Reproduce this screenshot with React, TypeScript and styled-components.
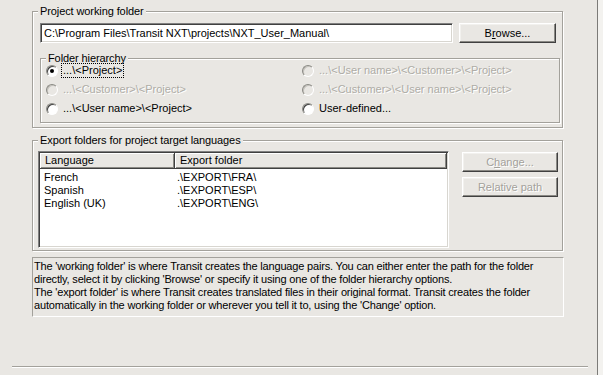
import styled, { createGlobalStyle } from "styled-components";

const GlobalStyle = createGlobalStyle`
  html, body {
    margin: 0;
    padding: 0;
  }
  body {
    background: #e9e7e3;
    font-family: "Liberation Sans", Arial, sans-serif;
    font-size: 11px;
    color: #000;
  }
`;

const Window = styled.div`
  display: flex;
  width: 603px;
  height: 375px;
  overflow: hidden;
  background: #e9e7e3;
`;
const Main = styled.div`
  flex: 1;
  display: flex;
  flex-direction: column;
  padding-left: 12px;
`;
const Edge = styled.div`
  width: 5px;
  border-left: 1px solid #7c7b78;
  background: #f3f2ef;
`;
const Pane = styled.div`
  display: flex;
  flex-direction: column;
  width: 531px;
  margin-left: 20px;
  padding-top: 5px;
`;
const GroupBox = styled.fieldset<{ $pad: string; $mt?: number; $mx?: string }>`
  margin: ${(p) => p.$mt ?? 0}px ${(p) => p.$mx ?? "0"} 0;
  padding: ${(p) => p.$pad};
  border: 1px solid #a3a19b;
  box-shadow: inset 1px 1px 0 #fff, 1px 1px 0 #fff;
  min-width: 0;
`;
const Caption = styled.legend<{ $shift?: number }>`
  padding: 0 2px;
  margin-left: ${(p) => p.$shift ?? 0}px;
  line-height: 12px;
  letter-spacing: -0.1px;
  background: #e9e7e3;
`;
const SmallCaption = styled(Caption)`
  line-height: 10px;
`;
const PathRow = styled.div`
  display: flex;
  gap: 6px;
`;
const TextBox = styled.div`
  box-sizing: border-box;
  width: 413px;
  height: 20px;
  border: 1px solid;
  border-color: #808080 #fff #fff #808080;
  box-shadow: inset 1px 1px 0 #404040, inset -1px -1px 0 #d8d6d0;
  background: #fff;
  padding: 0 3px;
  display: flex;
  align-items: center;
  white-space: nowrap;
`;
const PushButton = styled.button<{ $w?: number }>`
  box-sizing: border-box;
  width: ${(p) => p.$w ?? 96}px;
  height: 20px;
  padding: 0;
  font: inherit;
  color: #000;
  background: #e9e7e3;
  border: 1px solid;
  border-color: #fff #404040 #404040 #fff;
  box-shadow: inset -1px -1px 0 #8a8984, inset 1px 1px 0 #f2f1ee;
  &:disabled {
    color: #a3a19b;
    text-shadow: 1px 1px 0 #fff;
  }
  u {
    text-decoration: underline;
  }
`;
const HierarchyGrid = styled.div`
  display: grid;
  grid-template-columns: 256px 1fr;
  row-gap: 4px;
`;
const RadioRow = styled.div<{ $disabled?: boolean }>`
  display: flex;
  align-items: center;
  gap: 4px;
  height: 15px;
  white-space: nowrap;
  color: ${(p) => (p.$disabled ? "#aeaca6" : "#000")};
  text-shadow: ${(p) => (p.$disabled ? "1px 1px 0 #fff" : "none")};
`;
const RadioDot = styled.span<{ $checked?: boolean; $disabled?: boolean }>`
  box-sizing: border-box;
  flex: none;
  width: 12px;
  height: 12px;
  border-radius: 50%;
  border: 1px solid;
  border-color: #8a8984 #fff #fff #8a8984;
  box-shadow: inset 1px 1px 0 ${(p) => (p.$disabled ? "#c4c2bc" : "#404040")};
  background: ${(p) => (p.$disabled ? "#e9e7e3" : "#fff")};
  display: flex;
  align-items: center;
  justify-content: center;
  &::after {
    content: "";
    display: ${(p) => (p.$checked ? "block" : "none")};
    width: 4px;
    height: 4px;
    border-radius: 50%;
    background: #000;
  }
`;
const RadioLabel = styled.span<{ $focus?: boolean }>`
  padding: 0 1px;
  line-height: 13px;
  outline: ${(p) => (p.$focus ? "1px dotted #000" : "none")};
`;
const ExportRow = styled.div`
  display: flex;
  gap: 13px;
`;
const ListView = styled.div`
  box-sizing: border-box;
  width: 411px;
  height: 97px;
  border: 1px solid;
  border-color: #808080 #fff #fff #808080;
  box-shadow: inset 1px 1px 0 #404040, inset -1px -1px 0 #d8d6d0;
  background: #fff;
  padding: 1px;
`;
const HeaderRow = styled.div`
  display: grid;
  grid-template-columns: 135px 1fr;
  height: 16px;
`;
const HeaderCell = styled.div`
  box-sizing: border-box;
  background: #e9e7e3;
  border-right: 1px solid #404040;
  border-bottom: 1px solid #404040;
  box-shadow: inset 1px 1px 0 #fff, inset -1px -1px 0 #8a8984;
  padding-left: 5px;
  line-height: 15px;
`;
const ListBody = styled.div`
  padding-top: 2px;
`;
const ListRow = styled.div`
  display: grid;
  grid-template-columns: 135px 1fr;
  line-height: 13px;
`;
const Cell = styled.span<{ $pad: number }>`
  padding-left: ${(p) => p.$pad}px;
`;
const ButtonColumn = styled.div`
  display: flex;
  flex-direction: column;
  gap: 5px;
  margin-top: 1px;
`;
const Hint = styled.div`
  box-sizing: border-box;
  width: 532px;
  height: 60px;
  margin-top: 6px;
  border: 1px solid;
  border-color: #a3a19b #fff #fff #a3a19b;
  padding: 2px 0 0 1px;
  line-height: 13px;
  letter-spacing: -0.18px;
  white-space: nowrap;
`;
const Separator = styled.div`
  width: 576px;
  margin-top: 49px;
  border-top: 1px solid #a3a19b;
  border-bottom: 1px solid #fff;
`;

type Option = {
  label: string;
  checked?: boolean;
  disabled?: boolean;
  focus?: boolean;
};

const options: Option[] = [
  { label: "...\\<Project>", checked: true, focus: true },
  { label: "...\\<User name>\\<Customer>\\<Project>", disabled: true },
  { label: "...\\<Customer>\\<Project>", disabled: true },
  { label: "...\\<Customer>\\<User name>\\<Project>", disabled: true },
  { label: "...\\<User name>\\<Project>" },
  { label: "User-defined..." },
];

const languages = [
  { name: "French", folder: ".\\EXPORT\\FRA\\" },
  { name: "Spanish", folder: ".\\EXPORT\\ESP\\" },
  { name: "English (UK)", folder: ".\\EXPORT\\ENG\\" },
];

const hint = [
  "The 'working folder' is where Transit creates the language pairs. You can either enter the path for the folder",
  "directly, select it by clicking 'Browse' or specify it using one of the folder hierarchy options.",
  "The 'export folder' is where Transit creates translated files in their original format. Transit creates the folder",
  "automatically in the working folder or wherever you tell it to, using the 'Change' option.",
];

export default function App() {
  return (
    <>
      <GlobalStyle />
      <Window>
        <Main>
          <Pane>
            <GroupBox $pad="6px 6px 5px 7px">
              <Caption $shift={-2}>Project working folder</Caption>
              <PathRow>
                <TextBox>C:\Program Files\Transit NXT\projects\NXT_User_Manual\</TextBox>
                <PushButton $w={97}>
                  B<u>r</u>owse...
                </PushButton>
              </PathRow>
              <GroupBox $pad="0 4px 6px 5px" $mt={10} $mx="-4px -1px">
                <SmallCaption>Folder hierarchy</SmallCaption>
                <HierarchyGrid>
                  {options.map((o) => (
                    <RadioRow key={o.label} $disabled={o.disabled}>
                      <RadioDot $checked={o.checked} $disabled={o.disabled} />
                      <RadioLabel $focus={o.focus}>{o.label}</RadioLabel>
                    </RadioRow>
                  ))}
                </HierarchyGrid>
              </GroupBox>
            </GroupBox>
            <GroupBox $pad="5px 4px 2px 5px" $mt={6}>
              <Caption>Export folders for project target languages</Caption>
              <ExportRow>
                <ListView>
                  <HeaderRow>
                    <HeaderCell>Language</HeaderCell>
                    <HeaderCell>Export folder</HeaderCell>
                  </HeaderRow>
                  <ListBody>
                    {languages.map((l) => (
                      <ListRow key={l.name}>
                        <Cell $pad={4}>{l.name}</Cell>
                        <Cell $pad={2}>{l.folder}</Cell>
                      </ListRow>
                    ))}
                  </ListBody>
                </ListView>
                <ButtonColumn>
                  <PushButton disabled>
                    C<u>h</u>ange...
                  </PushButton>
                  <PushButton disabled>Relative path</PushButton>
                </ButtonColumn>
              </ExportRow>
            </GroupBox>
            <Hint>
              {hint.map((line) => (
                <div key={line}>{line}</div>
              ))}
            </Hint>
          </Pane>
          <Separator />
        </Main>
        <Edge />
      </Window>
    </>
  );
}
